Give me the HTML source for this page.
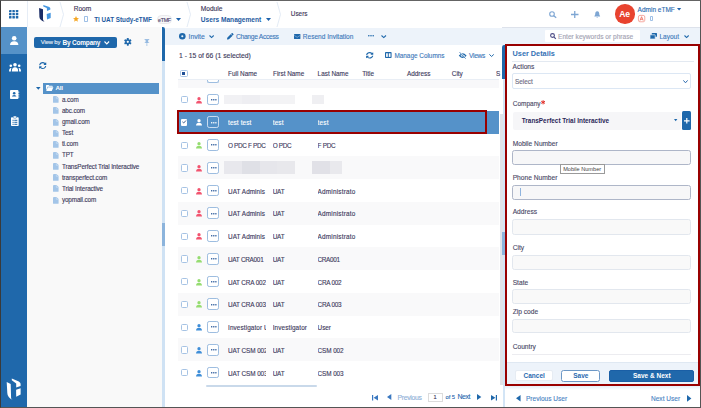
<!DOCTYPE html>
<html><head><meta charset="utf-8">
<style>
*{box-sizing:border-box;margin:0;padding:0}
html,body{width:701px;height:408px;overflow:hidden;background:#fff}
body{position:relative;font-family:"Liberation Sans",sans-serif;color:#3d3a5c}
.a{position:absolute}
.t{position:absolute;white-space:nowrap;line-height:1;-webkit-text-stroke:0.12px currentColor}
svg{position:absolute;overflow:visible}
</style></head><body>
<!-- outer frame -->
<div class="a" style="left:0;top:0;width:701px;height:408px;border-style:solid;border-width:1px;border-color:#646464 #555555 #555555 #3a3a3a;z-index:50;pointer-events:none"></div>

<!-- HEADER -->
<div class="a" style="left:1px;top:1px;width:699px;height:27.3px;background:#fff;border-bottom:1px solid #dde2eb"></div>
<div class="a" style="left:27px;top:1px;width:1px;height:26px;background:#e6edf6"></div>
<!-- grid icon -->
<svg style="left:9.3px;top:9.8px" width="9.3" height="8.4" viewBox="0 0 9.3 8.4"><g fill="#1f68ab">
<rect x="0" y="0" width="2.5" height="2.3" rx="0.5"/><rect x="3.4" y="0" width="2.5" height="2.3" rx="0.5"/><rect x="6.8" y="0" width="2.5" height="2.3" rx="0.5"/>
<rect x="0" y="3.05" width="2.5" height="2.3" rx="0.5"/><rect x="3.4" y="3.05" width="2.5" height="2.3" rx="0.5"/><rect x="6.8" y="3.05" width="2.5" height="2.3" rx="0.5"/>
<rect x="0" y="6.1" width="2.5" height="2.3" rx="0.5"/><rect x="3.4" y="6.1" width="2.5" height="2.3" rx="0.5"/><rect x="6.8" y="6.1" width="2.5" height="2.3" rx="0.5"/></g></svg>
<!-- logo -->
<svg style="left:34px;top:2px" width="22" height="23" viewBox="0 0 22 23">
<path d="M5.1 5.9 L9 7.3 L9 17.5 Q9.4 19 10.5 19.8 Q5.6 18.2 5.4 15 Z" fill="#1b2d66"/>
<path d="M9.3 3.1 L15.3 5.1 Q16.6 6 16.4 7.6 L13 9 L12.8 6.1 L9.3 4.4 Z" fill="#4596e0"/>
<path d="M12.7 12.1 L16.7 10.7 L16.7 16.1 L13 17.5 Z" fill="#4596e0"/>
</svg>
<!-- separators -->
<svg style="left:60px;top:2px" width="4" height="25" viewBox="0 0 4 25"><path d="M0 0 L3.5 12.5 L0 25" fill="none" stroke="#dce6f2" stroke-width="0.8"/></svg>
<svg style="left:187px;top:2px" width="4" height="25" viewBox="0 0 4 25"><path d="M0 0 L3.5 12.5 L0 25" fill="none" stroke="#dce6f2" stroke-width="0.8"/></svg>
<svg style="left:277px;top:2px" width="4" height="25" viewBox="0 0 4 25"><path d="M0 0 L3.5 12.5 L0 25" fill="none" stroke="#dce6f2" stroke-width="0.8"/></svg>

<div class="t" style="left:73.7px;top:6.3px;font-size:6.6px;color:#3a3456">Room</div>
<svg style="left:73px;top:16px" width="6" height="6" viewBox="0 0 10 10"><path d="M5 0 L6.5 3.3 L10 3.6 L7.3 6 L8.1 9.6 L5 7.7 L1.9 9.6 L2.7 6 L0 3.6 L3.5 3.3Z" fill="#f5a623"/></svg>
<div class="a" style="left:84px;top:16px;width:3.6px;height:5.5px;border:0.8px solid #9fc0e6;border-radius:0.8px"></div>
<div class="t" style="left:94.2px;top:16.5px;font-size:6.3px;font-weight:700;-webkit-text-stroke:0;color:#1e5aa0">TI UAT Study-eTMF</div>
<div class="a" style="left:156.5px;top:15px;width:15.5px;height:8.7px;border-radius:4.4px;background:#f7f7f8;border:0.8px solid #e9e9ec"></div>
<div class="t" style="left:158px;top:17.7px;font-size:5.3px;letter-spacing:-0.25px;color:#4a3f6b">eTMF</div>
<svg style="left:176px;top:18.3px" width="5" height="3" viewBox="0 0 5 3"><path d="M0 0 L5 0 L2.5 3Z" fill="#1e62ab"/></svg>

<div class="t" style="left:200.8px;top:6.3px;font-size:6.6px;color:#3a3456">Module</div>
<div class="t" style="left:200.8px;top:16.5px;font-size:6.6px;font-weight:700;-webkit-text-stroke:0;color:#1e5aa0">Users Management</div>
<svg style="left:265.6px;top:18.3px" width="5" height="3" viewBox="0 0 5 3"><path d="M0 0 L5 0 L2.5 3Z" fill="#1e62ab"/></svg>
<div class="t" style="left:290.8px;top:11.3px;font-size:6.4px;color:#3a3456">Users</div>

<!-- right header icons -->
<svg style="left:549px;top:10.7px" width="8" height="7" viewBox="0 0 8 7"><circle cx="3" cy="3" r="2.3" fill="none" stroke="#7ea6d3" stroke-width="1.1"/><path d="M4.7 4.7 L7.2 6.8" stroke="#7ea6d3" stroke-width="1.3"/></svg>
<svg style="left:571.4px;top:10.7px" width="7.5" height="7" viewBox="0 0 7.5 7"><path d="M3.75 0 V7 M0 3.5 H7.5" stroke="#7ea6d3" stroke-width="1.3"/></svg>
<svg style="left:593.6px;top:10.5px" width="6.5" height="7" viewBox="0 0 6.5 7"><path d="M3.25 0.3 C1.5 0.3 1.2 1.8 1.2 3.4 L0.3 5.6 H6.2 L5.3 3.4 C5.3 1.8 5 0.3 3.25 0.3Z M2.3 6 Q3.25 7.2 4.2 6Z" fill="#7ea6d3"/></svg>
<div class="a" style="left:615px;top:4.3px;width:19.5px;height:19.5px;border-radius:50%;background:#e8432f"></div>
<div class="t" style="left:619.2px;top:9.6px;font-size:8.6px;letter-spacing:-0.2px;font-weight:700;-webkit-text-stroke:0;color:#fff">Ae</div>
<div class="t" style="left:637.6px;top:7.1px;font-size:6.5px;color:#2a6ab0">Admin eTMF</div>
<svg style="left:676.6px;top:8px" width="4.2" height="2.6" viewBox="0 0 4.2 2.6"><path d="M0 0 L4.2 0 L2.1 2.6Z" fill="#1e62ab"/></svg>
<svg style="left:637.8px;top:15.1px" width="7.2" height="7.2" viewBox="0 0 7.2 7.2"><rect x="0.4" y="0.4" width="6.4" height="6.4" rx="1.6" fill="none" stroke="#f3958a" stroke-width="0.8"/><path d="M2 5.6 L3.6 1.7 L5.2 5.6 M2.6 4.3 H4.6" fill="none" stroke="#ec5f4c" stroke-width="0.75"/></svg>
<div class="a" style="left:649.7px;top:15.8px;width:3.2px;height:5.1px;border:0.8px solid #9fc0e6;border-radius:0.9px"></div>

<!-- LEFT SIDEBAR -->
<div class="a" style="left:1px;top:27px;width:26px;height:380px;background:#1f68ab"></div>
<div class="a" style="left:1px;top:27px;width:26px;height:27px;background:#5592c8"></div>
<!-- user icon -->
<svg style="left:9.8px;top:36px" width="8.4" height="9" viewBox="0 0 8.4 9"><circle cx="4.2" cy="2.3" r="2.3" fill="#fff"/><path d="M0 9 Q0 5.2 4.2 5.2 Q8.4 5.2 8.4 9Z" fill="#fff"/></svg>
<!-- group icon -->
<svg style="left:9.2px;top:62.9px" width="12" height="8.5" viewBox="0 0 12 8.5"><g fill="#fff">
<circle cx="6" cy="1.8" r="1.8"/><circle cx="1.8" cy="2.8" r="1.3"/><circle cx="10.2" cy="2.8" r="1.3"/>
<path d="M2.8 8.5 Q2.8 4.3 6 4.3 Q9.2 4.3 9.2 8.5Z"/><path d="M0 8.5 Q0 5 2 5 L2.4 5 Q1.8 6.5 1.9 8.5Z"/><path d="M12 8.5 Q12 5 10 5 L9.6 5 Q10.2 6.5 10.1 8.5Z"/></g></svg>
<!-- contact card -->
<svg style="left:9.7px;top:90px" width="9.2" height="9" viewBox="0 0 9.2 9"><path d="M0.8 0 H7.6 Q8.4 0 8.4 0.8 V8.2 Q8.4 9 7.6 9 H0.8 Q0 9 0 8.2 V0.8 Q0 0 0.8 0Z" fill="#fff"/><rect x="8.5" y="1.5" width="0.7" height="1.5" fill="#fff"/><rect x="8.5" y="4" width="0.7" height="1.5" fill="#fff"/><rect x="8.5" y="6.3" width="0.7" height="1.5" fill="#fff"/><circle cx="4.2" cy="3.3" r="1.3" fill="#1f68ab"/><path d="M2 6.6 Q2 5 4.2 5 Q6.4 5 6.4 6.6Z" fill="#1f68ab"/></svg>
<!-- clipboard -->
<svg style="left:10.5px;top:116px" width="7.7" height="10" viewBox="0 0 7.7 10"><path d="M0.8 1.2 H6.9 Q7.7 1.2 7.7 2 V9.2 Q7.7 10 6.9 10 H0.8 Q0 10 0 9.2 V2 Q0 1.2 0.8 1.2Z" fill="#fff"/><rect x="2.3" y="0" width="3.1" height="2.2" rx="0.6" fill="#fff" stroke="#1f68ab" stroke-width="0.5"/><g fill="#1f68ab"><rect x="1.5" y="3.8" width="1.2" height="1"/><rect x="3.3" y="3.8" width="3" height="1"/><rect x="1.5" y="5.8" width="1.2" height="1"/><rect x="3.3" y="5.8" width="3" height="1"/><rect x="1.5" y="7.8" width="1.2" height="1"/><rect x="3.3" y="7.8" width="3" height="1"/></g></svg>
<!-- bottom logo white -->
<svg style="left:3px;top:374px" width="22" height="30" viewBox="0 0 22 30">
<path d="M3.7 8.1 L7.7 9.9 L8.1 24.3 Q8.5 25.5 9.9 26.1 Q4.4 23.5 4.3 19 Z" fill="#fff"/>
<path d="M8.8 4.4 L15.8 7.4 Q17.6 8.5 17.6 9.8 L17.6 12.1 L13.2 13.6 L13.2 9.6 L8.8 6.3 Z" fill="#fff"/>
<path d="M13.1 15.8 L17.6 14.3 L17.6 20.6 L13.2 22.8 Z" fill="#fff"/>
</svg>

<!-- TREE PANEL -->
<div class="a" style="left:27px;top:27px;width:135px;height:380px;background:#f9f9f9"></div>
<div class="a" style="left:34px;top:36.5px;width:83px;height:11.5px;background:#1f68ab;border-radius:2px"></div>
<div class="t" style="left:40.8px;top:40.3px;font-size:5.9px;letter-spacing:-0.15px;color:#e6eef8">View by</div>
<div class="t" style="left:62.5px;top:39.6px;font-size:6.5px;font-weight:700;-webkit-text-stroke:0;letter-spacing:-0.2px;color:#fff">By Company</div>
<svg style="left:103.8px;top:40.8px" width="5.6" height="3.5" viewBox="0 0 5.6 3.5"><path d="M0.5 0.5 L2.8 2.9 L5.1 0.5" fill="none" stroke="#fff" stroke-width="1.1"/></svg>
<!-- gear -->
<svg style="left:124px;top:38.1px" width="7.6" height="7.7" viewBox="0 0 8 8"><g fill="#1f68ab"><circle cx="4" cy="4" r="2.7"/><rect x="3" y="0" width="2" height="8" rx="0.4"/><rect x="3" y="0" width="2" height="8" rx="0.4" transform="rotate(60 4 4)"/><rect x="3" y="0" width="2" height="8" rx="0.4" transform="rotate(120 4 4)"/></g><circle cx="4" cy="4" r="1.2" fill="#fafafa"/></svg>
<!-- pin -->
<svg style="left:143.9px;top:39px" width="5.8" height="7" viewBox="0 0 5.8 7"><g fill="#94b9e0"><rect x="0.6" y="0" width="4.6" height="0.9"/><path d="M1.5 0.9 H4.3 L4.1 3 L5.6 4.1 H0.2 L1.7 3Z"/><rect x="2.55" y="4.1" width="0.7" height="2.9"/></g></svg>
<!-- refresh -->
<svg style="left:38.9px;top:61.9px" width="7.4" height="7.2" viewBox="0 0 512 512" preserveAspectRatio="none"><path d="M370.72 133.28C339.458 104.008 298.888 87.962 255.848 88c-77.458.068-144.328 53.178-162.791 126.85-1.344 5.363-6.122 9.15-11.651 9.150H24.103c-7.498 0-13.194-6.807-11.807-14.176C33.933 94.924 134.813 8 256 8c66.448 0 126.791 26.136 171.315 68.685L463.03 40.97C478.149 25.851 504 36.559 504 57.941V192c0 13.255-10.745 24-24 24H345.941c-21.382 0-32.090-25.851-16.971-40.971l41.750-41.749zM32 296h134.059c21.382 0 32.090 25.851 16.971 40.971l-41.750 41.750c31.262 29.273 71.835 45.319 114.876 45.280 77.418-.070 144.315-53.144 162.787-126.849 1.344-5.363 6.122-9.150 11.651-9.150h57.304c7.498 0 13.194 6.807 11.807 14.176C478.067 417.076 377.187 504 256 504c-66.448 0-126.791-26.136-171.315-68.685L48.970 471.030C33.851 486.149 8 475.441 8 454.059V320c0-13.255 10.745-24 24-24z" fill="#1f68ab"/></svg>

<!-- tree -->
<svg style="left:36.4px;top:86.9px" width="4.6" height="2.7" viewBox="0 0 4.6 2.7"><path d="M0 0 L4.6 0 L2.3 2.7Z" fill="#1f68ab"/></svg>
<div class="a" style="left:43px;top:83px;width:116px;height:10.7px;background:#5592c9"></div>
<svg style="left:45.8px;top:85px" width="7.4" height="6" viewBox="0 0 7.4 6"><path d="M0 0.6 Q0 0 0.6 0 H2.6 L3.3 0.8 H6.2 Q6.8 0.8 6.8 1.4 V1.8 H1.6 L0 5.5Z" fill="#fff"/><path d="M1.8 2.3 H7.4 L5.8 6 H0.2Z" fill="#fff"/></svg>
<div class="t" style="left:55.4px;top:85.4px;font-size:6.2px;font-weight:700;-webkit-text-stroke:0;letter-spacing:-0.2px;color:#fff">All</div>
<svg style="left:53.2px;top:96.20px" width="5.6" height="6.7" viewBox="0 0 5.6 6.7"><path d="M0 0.5 Q0 0 0.5 0 H3.5 L5.6 2 V6.2 Q5.6 6.7 5.1 6.7 H0.5 Q0 6.7 0 6.2Z" fill="#a3c5e8"/><path d="M3.3 0.3 V2.3 H5.4" fill="none" stroke="#d3e4f5" stroke-width="0.6"/></svg>
<div class="t" style="left:61.9px;top:96.70px;font-size:6.35px;letter-spacing:-0.12px;color:#3d3a5c">a.com</div>
<svg style="left:53.2px;top:107.35px" width="5.6" height="6.7" viewBox="0 0 5.6 6.7"><path d="M0 0.5 Q0 0 0.5 0 H3.5 L5.6 2 V6.2 Q5.6 6.7 5.1 6.7 H0.5 Q0 6.7 0 6.2Z" fill="#a3c5e8"/><path d="M3.3 0.3 V2.3 H5.4" fill="none" stroke="#d3e4f5" stroke-width="0.6"/></svg>
<div class="t" style="left:61.9px;top:107.85px;font-size:6.35px;letter-spacing:-0.12px;color:#3d3a5c">abc.com</div>
<svg style="left:53.2px;top:118.50px" width="5.6" height="6.7" viewBox="0 0 5.6 6.7"><path d="M0 0.5 Q0 0 0.5 0 H3.5 L5.6 2 V6.2 Q5.6 6.7 5.1 6.7 H0.5 Q0 6.7 0 6.2Z" fill="#a3c5e8"/><path d="M3.3 0.3 V2.3 H5.4" fill="none" stroke="#d3e4f5" stroke-width="0.6"/></svg>
<div class="t" style="left:61.9px;top:119.00px;font-size:6.35px;letter-spacing:-0.12px;color:#3d3a5c">gmail.com</div>
<svg style="left:53.2px;top:129.65px" width="5.6" height="6.7" viewBox="0 0 5.6 6.7"><path d="M0 0.5 Q0 0 0.5 0 H3.5 L5.6 2 V6.2 Q5.6 6.7 5.1 6.7 H0.5 Q0 6.7 0 6.2Z" fill="#a3c5e8"/><path d="M3.3 0.3 V2.3 H5.4" fill="none" stroke="#d3e4f5" stroke-width="0.6"/></svg>
<div class="t" style="left:61.9px;top:130.15px;font-size:6.35px;letter-spacing:-0.12px;color:#3d3a5c">Test</div>
<svg style="left:53.2px;top:140.80px" width="5.6" height="6.7" viewBox="0 0 5.6 6.7"><path d="M0 0.5 Q0 0 0.5 0 H3.5 L5.6 2 V6.2 Q5.6 6.7 5.1 6.7 H0.5 Q0 6.7 0 6.2Z" fill="#a3c5e8"/><path d="M3.3 0.3 V2.3 H5.4" fill="none" stroke="#d3e4f5" stroke-width="0.6"/></svg>
<div class="t" style="left:61.9px;top:141.30px;font-size:6.35px;letter-spacing:-0.12px;color:#3d3a5c">ti.com</div>
<svg style="left:53.2px;top:151.95px" width="5.6" height="6.7" viewBox="0 0 5.6 6.7"><path d="M0 0.5 Q0 0 0.5 0 H3.5 L5.6 2 V6.2 Q5.6 6.7 5.1 6.7 H0.5 Q0 6.7 0 6.2Z" fill="#a3c5e8"/><path d="M3.3 0.3 V2.3 H5.4" fill="none" stroke="#d3e4f5" stroke-width="0.6"/></svg>
<div class="t" style="left:61.9px;top:152.45px;font-size:6.35px;letter-spacing:-0.12px;color:#3d3a5c">TPT</div>
<svg style="left:53.2px;top:163.10px" width="5.6" height="6.7" viewBox="0 0 5.6 6.7"><path d="M0 0.5 Q0 0 0.5 0 H3.5 L5.6 2 V6.2 Q5.6 6.7 5.1 6.7 H0.5 Q0 6.7 0 6.2Z" fill="#a3c5e8"/><path d="M3.3 0.3 V2.3 H5.4" fill="none" stroke="#d3e4f5" stroke-width="0.6"/></svg>
<div class="t" style="left:61.9px;top:163.60px;font-size:6.35px;letter-spacing:-0.12px;color:#3d3a5c">TransPerfect Trial Interactive</div>
<svg style="left:53.2px;top:174.25px" width="5.6" height="6.7" viewBox="0 0 5.6 6.7"><path d="M0 0.5 Q0 0 0.5 0 H3.5 L5.6 2 V6.2 Q5.6 6.7 5.1 6.7 H0.5 Q0 6.7 0 6.2Z" fill="#a3c5e8"/><path d="M3.3 0.3 V2.3 H5.4" fill="none" stroke="#d3e4f5" stroke-width="0.6"/></svg>
<div class="t" style="left:61.9px;top:174.75px;font-size:6.35px;letter-spacing:-0.12px;color:#3d3a5c">transperfect.com</div>
<svg style="left:53.2px;top:185.40px" width="5.6" height="6.7" viewBox="0 0 5.6 6.7"><path d="M0 0.5 Q0 0 0.5 0 H3.5 L5.6 2 V6.2 Q5.6 6.7 5.1 6.7 H0.5 Q0 6.7 0 6.2Z" fill="#a3c5e8"/><path d="M3.3 0.3 V2.3 H5.4" fill="none" stroke="#d3e4f5" stroke-width="0.6"/></svg>
<div class="t" style="left:61.9px;top:185.90px;font-size:6.35px;letter-spacing:-0.12px;color:#3d3a5c">Trial Interactive</div>
<svg style="left:53.2px;top:196.55px" width="5.6" height="6.7" viewBox="0 0 5.6 6.7"><path d="M0 0.5 Q0 0 0.5 0 H3.5 L5.6 2 V6.2 Q5.6 6.7 5.1 6.7 H0.5 Q0 6.7 0 6.2Z" fill="#a3c5e8"/><path d="M3.3 0.3 V2.3 H5.4" fill="none" stroke="#d3e4f5" stroke-width="0.6"/></svg>
<div class="t" style="left:61.9px;top:197.05px;font-size:6.35px;letter-spacing:-0.12px;color:#3d3a5c">yopmail.com</div>

<!-- splitter -->
<div class="a" style="left:161.6px;top:27px;width:3.4px;height:380px;background:#cfe2f4"></div>
<div class="a" style="left:161.4px;top:27px;width:3.6px;height:34px;background:#fff"></div>
<div class="a" style="left:161.6px;top:27.3px;width:3.4px;height:33.6px;background:#1f68ab;border-radius:0 2.2px 0 0"></div>
<div class="a" style="left:161.6px;top:223px;width:3.4px;height:23px;background:#8cb4dc"></div>

<!-- MAIN -->
<div class="a" style="left:165px;top:27px;width:337px;height:380px;background:#fff"></div>
<div class="a" style="left:165px;top:28.3px;width:535px;height:16.4px;background:#edf3fa"></div>
<!-- toolbar items -->
<svg style="left:179.4px;top:32.9px" width="6.6" height="6.6" viewBox="0 0 6.6 6.6"><circle cx="3.3" cy="3.3" r="3.3" fill="#1f68ab"/><circle cx="3.3" cy="3.3" r="1.05" fill="#edf3fa"/></svg>
<div class="t" style="left:188.5px;top:33.9px;font-size:6.8px;color:#4079ba">Invite</div>
<svg style="left:208.5px;top:34.6px" width="5.2" height="3.2" viewBox="0 0 5.2 3.2"><path d="M0.5 0.5 L2.6 2.6 L4.7 0.5" fill="none" stroke="#1f68ab" stroke-width="1.1"/></svg>
<svg style="left:226.8px;top:32.8px" width="6.6" height="6.6" viewBox="0 0 512 512"><path d="M497.9 142.1l-46.1 46.1c-4.7 4.7-12.3 4.7-17 0l-111-111c-4.7-4.7-4.7-12.3 0-17l46.1-46.1c18.7-18.7 49.1-18.7 67.9 0l60.1 60.1c18.8 18.7 18.8 49.1 0 67.9zM284.2 99.8L21.6 362.4.4 483.9c-2.9 16.4 11.4 30.6 27.8 27.8l121.5-21.3 262.6-262.6c4.7-4.7 4.7-12.3 0-17l-111-111c-4.8-4.7-12.4-4.7-17.1 0z" fill="#1f68ab"/></svg>
<div class="t" style="left:236px;top:33.7px;font-size:6.7px;letter-spacing:-0.3px;color:#4079ba">Change Access</div>
<svg style="left:293.6px;top:33.5px" width="6.4" height="5.1" viewBox="0 0 6.4 5.1"><rect x="0" y="0" width="6.4" height="5.1" rx="0.6" fill="#1f68ab"/><path d="M0.2 1.4 L3.2 3.3 L6.2 1.4" fill="none" stroke="#9fc0e3" stroke-width="0.6"/></svg>
<div class="t" style="left:302.8px;top:33.9px;font-size:6.55px;color:#4079ba">Resend Invitation</div>
<svg style="left:368px;top:35.4px" width="6" height="1.6" viewBox="0 0 6 1.6"><g fill="#1f68ab"><circle cx="0.8" cy="0.8" r="0.8"/><circle cx="3" cy="0.8" r="0.8"/><circle cx="5.2" cy="0.8" r="0.8"/></g></svg>
<svg style="left:380.7px;top:34.6px" width="5.5" height="3.2" viewBox="0 0 5.5 3.2"><path d="M0.5 0.5 L2.75 2.6 L5 0.5" fill="none" stroke="#1f68ab" stroke-width="1.1"/></svg>
<!-- search box -->
<div class="a" style="left:545px;top:30px;width:95px;height:12.2px;background:#fff;border-radius:1px"></div>
<svg style="left:549.5px;top:32.8px" width="6" height="6" viewBox="0 0 6 6"><circle cx="2.5" cy="2.5" r="1.9" fill="none" stroke="#4e4c86" stroke-width="1.1"/><path d="M3.8 3.8 L5.8 5.8" stroke="#4e4c86" stroke-width="1.2"/></svg>
<div class="t" style="left:558px;top:33.8px;font-size:6.6px;color:#a3a3b3">Enter keywords or phrase</div>
<svg style="left:650.3px;top:33px" width="7" height="6" viewBox="0 0 7 6"><rect x="1.8" y="0" width="5.2" height="3.8" rx="0.5" fill="#1f68ab"/><rect x="0" y="1.8" width="5.2" height="4.2" rx="0.5" fill="#1f68ab" stroke="#edf3fa" stroke-width="0.7"/></svg>
<div class="t" style="left:659.5px;top:33.8px;font-size:6.5px;color:#4079ba">Layout</div>
<svg style="left:683.5px;top:35px" width="5.2" height="3.2" viewBox="0 0 5.2 3.2"><path d="M0.5 0.5 L2.6 2.6 L4.7 0.5" fill="none" stroke="#1f68ab" stroke-width="1.1"/></svg>

<!-- count row -->
<div class="t" style="left:179px;top:53.2px;font-size:6.8px;color:#3d3a5c">1 - 15 of 66 (1 selected)</div>
<svg style="left:365.6px;top:52px" width="7.4" height="6.6" viewBox="0 0 512 512" preserveAspectRatio="none"><path d="M370.72 133.28C339.458 104.008 298.888 87.962 255.848 88c-77.458.068-144.328 53.178-162.791 126.85-1.344 5.363-6.122 9.15-11.651 9.150H24.103c-7.498 0-13.194-6.807-11.807-14.176C33.933 94.924 134.813 8 256 8c66.448 0 126.791 26.136 171.315 68.685L463.03 40.97C478.149 25.851 504 36.559 504 57.941V192c0 13.255-10.745 24-24 24H345.941c-21.382 0-32.090-25.851-16.971-40.971l41.750-41.749zM32 296h134.059c21.382 0 32.090 25.851 16.971 40.971l-41.750 41.750c31.262 29.273 71.835 45.319 114.876 45.280 77.418-.070 144.315-53.144 162.787-126.849 1.344-5.363 6.122-9.150 11.651-9.150h57.304c7.498 0 13.194 6.807 11.807 14.176C478.067 417.076 377.187 504 256 504c-66.448 0-126.791-26.136-171.315-68.685L48.970 471.030C33.851 486.149 8 475.441 8 454.059V320c0-13.255 10.745-24 24-24z" fill="#1f68ab"/></svg>
<svg style="left:385px;top:52.3px" width="6.6" height="6" viewBox="0 0 6.6 6"><rect x="0" y="0" width="6.6" height="6" rx="0.8" fill="#1f68ab"/><rect x="1.1" y="1.3" width="1.7" height="3.6" fill="#fff"/><rect x="3.8" y="1.3" width="1.7" height="3.6" fill="#fff"/></svg>
<div class="t" style="left:394.4px;top:53px;font-size:6.4px;color:#4079ba">Manage Columns</div>
<svg style="left:459px;top:51.8px" width="7.4" height="6.8" viewBox="0 0 7.4 6.8"><path d="M0.6 3.6 Q3.7 0 6.8 3.6 Q3.7 7.2 0.6 3.6Z" fill="none" stroke="#1f68ab" stroke-width="1.2"/><circle cx="3.7" cy="3.6" r="1" fill="#1f68ab"/><path d="M0.8 0.3 L6.8 6.5" stroke="#fff" stroke-width="1.3"/><path d="M0.6 0.2 L6.6 6.6" stroke="#1f68ab" stroke-width="0.8"/></svg>
<div class="t" style="left:469px;top:52.8px;font-size:6.6px;letter-spacing:-0.28px;color:#4079ba">Views</div>
<svg style="left:489px;top:53.9px" width="5.2" height="3" viewBox="0 0 5.2 3"><path d="M0.4 0.4 L2.6 2.5 L4.8 0.4" fill="none" stroke="#1f68ab" stroke-width="1"/></svg>

<!-- table -->
<div class="a" style="left:178px;top:79px;width:321px;height:9.2px;background:#f8f8fa"></div>
<div class="a" style="left:207.3px;top:76px;width:11.9px;height:6.8px;border:1px solid #9dbde0;border-top:none;border-radius:0 0 2.2px 2.2px;background:#fff"></div>
<div class="a" style="left:165px;top:62px;width:337px;height:17px;background:#fff"></div>
<div class="a" style="left:178px;top:79px;width:321px;height:1px;background:#e9eef5"></div>
<div class="a" style="left:180.1px;top:70.3px;width:7.5px;height:7px;border:1px solid #a9c5e6;border-radius:1.5px;background:#fff"></div>
<div class="a" style="left:182.4px;top:72.4px;width:3px;height:3px;background:#1f4e96"></div>
<div class="t" style="left:228px;top:70.6px;font-size:6.4px;color:#3d3a5c">Full Name</div>
<div class="t" style="left:273px;top:70.6px;font-size:6.4px;color:#3d3a5c">First Name</div>
<div class="t" style="left:317.6px;top:70.6px;font-size:6.4px;color:#3d3a5c">Last Name</div>
<div class="t" style="left:362.2px;top:70.6px;font-size:6.4px;color:#3d3a5c">Title</div>
<div class="t" style="left:407px;top:70.6px;font-size:6.4px;color:#3d3a5c">Address</div>
<div class="t" style="left:451.8px;top:70.6px;font-size:6.4px;color:#3d3a5c">City</div>
<div class="t" style="left:496px;top:70.6px;font-size:6.4px;color:#3d3a5c">S</div>
<div class="a" style="left:178px;top:88.20px;width:321px;height:22.75px;background:#ffffff"></div>
<div class="a" style="left:180.7px;top:96.08px;width:7.2px;height:7.3px;border:1px solid #a6c3e4;border-radius:1.5px;background:#fff"></div>
<svg style="left:195.9px;top:96.67px" width="6" height="6.6" viewBox="0 0 6 6.6"><circle cx="3" cy="1.65" r="1.65" fill="#f2546f"/><path d="M0 6.6 Q0 3.7 3 3.7 Q6 3.7 6 6.6Z" fill="#f2546f"/></svg>
<div class="a" style="left:207.3px;top:93.67px;width:11.9px;height:11.7px;border:1px solid #9dbde0;border-radius:2.2px;background:#fff"></div>
<svg style="left:210.8px;top:99px" width="6" height="1.6" viewBox="0 0 6 1.6"><g fill="#2d5c9c"><rect x="0" y="0" width="1.4" height="1.5" rx="0.4"/><rect x="2.1" y="0" width="1.4" height="1.5" rx="0.4"/><rect x="4.2" y="0" width="1.4" height="1.5" rx="0.4"/></g></svg>
<div class="a" style="left:224.2px;top:95.08px;width:18px;height:9px;background:#f1f1f4"></div>
<div class="a" style="left:242.2px;top:95.08px;width:17.5px;height:9px;background:#eeeef2"></div>
<div class="a" style="left:259.7px;top:95.08px;width:17.5px;height:9px;background:#f3f3f5"></div>
<div class="a" style="left:277.2px;top:95.08px;width:17.5px;height:9px;background:#f3f3f5"></div>
<div class="a" style="left:312px;top:95.08px;width:12px;height:9px;background:#efeff2"></div>
<div class="a" style="left:178px;top:110.95px;width:321px;height:22.75px;background:#5592c9"></div>
<div class="a" style="left:181px;top:119.12px;width:6.4px;height:6.4px;background:#fff;border-radius:1px"></div>
<svg style="left:182px;top:120.33px" width="4.4" height="3.6" viewBox="0 0 4.4 3.6"><path d="M0.4 1.8 L1.7 3 L4 0.5" fill="none" stroke="#2b4d80" stroke-width="0.9"/></svg>
<svg style="left:195.9px;top:119.42px" width="6" height="6.6" viewBox="0 0 6 6.6"><circle cx="3" cy="1.65" r="1.65" fill="#ffffff"/><path d="M0 6.6 Q0 3.7 3 3.7 Q6 3.7 6 6.6Z" fill="#ffffff"/></svg>
<div class="a" style="left:207.3px;top:116.42px;width:11.9px;height:11.7px;border:1px solid #c9dcf0;border-radius:2.2px;background:transparent"></div>
<svg style="left:210.8px;top:122px" width="6" height="1.6" viewBox="0 0 6 1.6"><g fill="#ffffff"><rect x="0" y="0" width="1.4" height="1.5" rx="0.4"/><rect x="2.1" y="0" width="1.4" height="1.5" rx="0.4"/><rect x="4.2" y="0" width="1.4" height="1.5" rx="0.4"/></g></svg>
<div class="t" style="left:228px;top:120.42px;width:37.8px;overflow:hidden;font-size:6.4px;letter-spacing:0.110px;color:#ffffff">test test</div>
<div class="t" style="left:272.7px;top:120.42px;width:40px;overflow:hidden;font-size:6.4px;letter-spacing:0.170px;color:#ffffff">test</div>
<div class="t" style="left:317.6px;top:120.42px;width:44px;overflow:hidden;font-size:6.4px;letter-spacing:0.170px;color:#ffffff">test</div>
<div class="a" style="left:178px;top:133.70px;width:321px;height:22.75px;background:#ffffff"></div>
<div class="a" style="left:180.7px;top:141.57px;width:7.2px;height:7.3px;border:1px solid #a6c3e4;border-radius:1.5px;background:#fff"></div>
<svg style="left:195.9px;top:142.17px" width="6" height="6.6" viewBox="0 0 6 6.6"><circle cx="3" cy="1.65" r="1.65" fill="#95dc70"/><path d="M0 6.6 Q0 3.7 3 3.7 Q6 3.7 6 6.6Z" fill="#95dc70"/></svg>
<div class="a" style="left:207.3px;top:139.17px;width:11.9px;height:11.7px;border:1px solid #9dbde0;border-radius:2.2px;background:#fff"></div>
<svg style="left:210.8px;top:144px" width="6" height="1.6" viewBox="0 0 6 1.6"><g fill="#2d5c9c"><rect x="0" y="0" width="1.4" height="1.5" rx="0.4"/><rect x="2.1" y="0" width="1.4" height="1.5" rx="0.4"/><rect x="4.2" y="0" width="1.4" height="1.5" rx="0.4"/></g></svg>
<div class="t" style="left:228px;top:143.17px;width:37.8px;overflow:hidden;font-size:6.4px;letter-spacing:-0.330px;color:#3d3a5c">O PDC F PDC</div>
<div class="t" style="left:272.7px;top:143.17px;width:40px;overflow:hidden;font-size:6.4px;letter-spacing:-0.310px;color:#3d3a5c">O PDC</div>
<div class="t" style="left:317.6px;top:143.17px;width:44px;overflow:hidden;font-size:6.4px;letter-spacing:-0.300px;color:#3d3a5c">F PDC</div>
<div class="a" style="left:178px;top:156.45px;width:321px;height:22.75px;background:#f9f9fa"></div>
<div class="a" style="left:180.7px;top:164.32px;width:7.2px;height:7.3px;border:1px solid #a6c3e4;border-radius:1.5px;background:#fff"></div>
<svg style="left:195.9px;top:164.92px" width="6" height="6.6" viewBox="0 0 6 6.6"><circle cx="3" cy="1.65" r="1.65" fill="#f2546f"/><path d="M0 6.6 Q0 3.7 3 3.7 Q6 3.7 6 6.6Z" fill="#f2546f"/></svg>
<div class="a" style="left:207.3px;top:161.92px;width:11.9px;height:11.7px;border:1px solid #9dbde0;border-radius:2.2px;background:#fff"></div>
<svg style="left:210.8px;top:167px" width="6" height="1.6" viewBox="0 0 6 1.6"><g fill="#2d5c9c"><rect x="0" y="0" width="1.4" height="1.5" rx="0.4"/><rect x="2.1" y="0" width="1.4" height="1.5" rx="0.4"/><rect x="4.2" y="0" width="1.4" height="1.5" rx="0.4"/></g></svg>
<div class="a" style="left:224px;top:161.32px;width:18px;height:13px;background:#e8e8ed"></div>
<div class="a" style="left:242px;top:161.32px;width:17.5px;height:13px;background:#dfe0e6"></div>
<div class="a" style="left:259.5px;top:161.32px;width:17.5px;height:13px;background:#e6e6eb"></div>
<div class="a" style="left:277px;top:161.32px;width:18px;height:13px;background:#e8e8ec"></div>
<div class="a" style="left:312px;top:161.32px;width:18px;height:13px;background:#e1e1e7"></div>
<div class="a" style="left:330px;top:161.32px;width:12px;height:13px;background:#e9e9ed"></div>
<div class="a" style="left:178px;top:179.20px;width:321px;height:22.75px;background:#ffffff"></div>
<div class="a" style="left:180.7px;top:187.07px;width:7.2px;height:7.3px;border:1px solid #a6c3e4;border-radius:1.5px;background:#fff"></div>
<svg style="left:195.9px;top:187.67px" width="6" height="6.6" viewBox="0 0 6 6.6"><circle cx="3" cy="1.65" r="1.65" fill="#f2546f"/><path d="M0 6.6 Q0 3.7 3 3.7 Q6 3.7 6 6.6Z" fill="#f2546f"/></svg>
<div class="a" style="left:207.3px;top:184.67px;width:11.9px;height:11.7px;border:1px solid #9dbde0;border-radius:2.2px;background:#fff"></div>
<svg style="left:210.8px;top:190px" width="6" height="1.6" viewBox="0 0 6 1.6"><g fill="#2d5c9c"><rect x="0" y="0" width="1.4" height="1.5" rx="0.4"/><rect x="2.1" y="0" width="1.4" height="1.5" rx="0.4"/><rect x="4.2" y="0" width="1.4" height="1.5" rx="0.4"/></g></svg>
<div class="t" style="left:228px;top:188.67px;width:37.8px;overflow:hidden;font-size:6.4px;letter-spacing:0.050px;color:#3d3a5c">UAT Adminis</div>
<div class="t" style="left:272.7px;top:188.67px;width:40px;overflow:hidden;font-size:6.4px;letter-spacing:-0.200px;color:#3d3a5c">UAT</div>
<div class="t" style="left:317.6px;top:188.67px;width:44px;overflow:hidden;font-size:6.4px;letter-spacing:0.200px;color:#3d3a5c">Administrato</div>
<div class="a" style="left:178px;top:201.95px;width:321px;height:22.75px;background:#f9f9fa"></div>
<div class="a" style="left:180.7px;top:209.82px;width:7.2px;height:7.3px;border:1px solid #a6c3e4;border-radius:1.5px;background:#fff"></div>
<svg style="left:195.9px;top:210.42px" width="6" height="6.6" viewBox="0 0 6 6.6"><circle cx="3" cy="1.65" r="1.65" fill="#f2546f"/><path d="M0 6.6 Q0 3.7 3 3.7 Q6 3.7 6 6.6Z" fill="#f2546f"/></svg>
<div class="a" style="left:207.3px;top:207.42px;width:11.9px;height:11.7px;border:1px solid #9dbde0;border-radius:2.2px;background:#fff"></div>
<svg style="left:210.8px;top:213px" width="6" height="1.6" viewBox="0 0 6 1.6"><g fill="#2d5c9c"><rect x="0" y="0" width="1.4" height="1.5" rx="0.4"/><rect x="2.1" y="0" width="1.4" height="1.5" rx="0.4"/><rect x="4.2" y="0" width="1.4" height="1.5" rx="0.4"/></g></svg>
<div class="t" style="left:228px;top:211.42px;width:37.8px;overflow:hidden;font-size:6.4px;letter-spacing:0.050px;color:#3d3a5c">UAT Adminis</div>
<div class="t" style="left:272.7px;top:211.42px;width:40px;overflow:hidden;font-size:6.4px;letter-spacing:-0.200px;color:#3d3a5c">UAT</div>
<div class="t" style="left:317.6px;top:211.42px;width:44px;overflow:hidden;font-size:6.4px;letter-spacing:0.200px;color:#3d3a5c">Administrato</div>
<div class="a" style="left:178px;top:224.70px;width:321px;height:22.75px;background:#ffffff"></div>
<div class="a" style="left:180.7px;top:232.57px;width:7.2px;height:7.3px;border:1px solid #a6c3e4;border-radius:1.5px;background:#fff"></div>
<svg style="left:195.9px;top:233.17px" width="6" height="6.6" viewBox="0 0 6 6.6"><circle cx="3" cy="1.65" r="1.65" fill="#f2546f"/><path d="M0 6.6 Q0 3.7 3 3.7 Q6 3.7 6 6.6Z" fill="#f2546f"/></svg>
<div class="a" style="left:207.3px;top:230.17px;width:11.9px;height:11.7px;border:1px solid #9dbde0;border-radius:2.2px;background:#fff"></div>
<svg style="left:210.8px;top:235px" width="6" height="1.6" viewBox="0 0 6 1.6"><g fill="#2d5c9c"><rect x="0" y="0" width="1.4" height="1.5" rx="0.4"/><rect x="2.1" y="0" width="1.4" height="1.5" rx="0.4"/><rect x="4.2" y="0" width="1.4" height="1.5" rx="0.4"/></g></svg>
<div class="t" style="left:228px;top:234.17px;width:37.8px;overflow:hidden;font-size:6.4px;letter-spacing:0.050px;color:#3d3a5c">UAT Adminis</div>
<div class="t" style="left:272.7px;top:234.17px;width:40px;overflow:hidden;font-size:6.4px;letter-spacing:-0.200px;color:#3d3a5c">UAT</div>
<div class="t" style="left:317.6px;top:234.17px;width:44px;overflow:hidden;font-size:6.4px;letter-spacing:0.200px;color:#3d3a5c">Administrato</div>
<div class="a" style="left:178px;top:247.45px;width:321px;height:22.75px;background:#f9f9fa"></div>
<div class="a" style="left:180.7px;top:255.32px;width:7.2px;height:7.3px;border:1px solid #a6c3e4;border-radius:1.5px;background:#fff"></div>
<svg style="left:195.9px;top:255.92px" width="6" height="6.6" viewBox="0 0 6 6.6"><circle cx="3" cy="1.65" r="1.65" fill="#95dc70"/><path d="M0 6.6 Q0 3.7 3 3.7 Q6 3.7 6 6.6Z" fill="#95dc70"/></svg>
<div class="a" style="left:207.3px;top:252.92px;width:11.9px;height:11.7px;border:1px solid #9dbde0;border-radius:2.2px;background:#fff"></div>
<svg style="left:210.8px;top:258px" width="6" height="1.6" viewBox="0 0 6 1.6"><g fill="#2d5c9c"><rect x="0" y="0" width="1.4" height="1.5" rx="0.4"/><rect x="2.1" y="0" width="1.4" height="1.5" rx="0.4"/><rect x="4.2" y="0" width="1.4" height="1.5" rx="0.4"/></g></svg>
<div class="t" style="left:228px;top:256.93px;width:37.8px;overflow:hidden;font-size:6.4px;letter-spacing:-0.270px;color:#3d3a5c">UAT CRA001</div>
<div class="t" style="left:272.7px;top:256.93px;width:40px;overflow:hidden;font-size:6.4px;letter-spacing:-0.200px;color:#3d3a5c">UAT</div>
<div class="t" style="left:317.6px;top:256.93px;width:44px;overflow:hidden;font-size:6.4px;letter-spacing:-0.360px;color:#3d3a5c">CRA001</div>
<div class="a" style="left:178px;top:270.20px;width:321px;height:22.75px;background:#ffffff"></div>
<div class="a" style="left:180.7px;top:278.07px;width:7.2px;height:7.3px;border:1px solid #a6c3e4;border-radius:1.5px;background:#fff"></div>
<svg style="left:195.9px;top:278.68px" width="6" height="6.6" viewBox="0 0 6 6.6"><circle cx="3" cy="1.65" r="1.65" fill="#95dc70"/><path d="M0 6.6 Q0 3.7 3 3.7 Q6 3.7 6 6.6Z" fill="#95dc70"/></svg>
<div class="a" style="left:207.3px;top:275.68px;width:11.9px;height:11.7px;border:1px solid #9dbde0;border-radius:2.2px;background:#fff"></div>
<svg style="left:210.8px;top:281px" width="6" height="1.6" viewBox="0 0 6 1.6"><g fill="#2d5c9c"><rect x="0" y="0" width="1.4" height="1.5" rx="0.4"/><rect x="2.1" y="0" width="1.4" height="1.5" rx="0.4"/><rect x="4.2" y="0" width="1.4" height="1.5" rx="0.4"/></g></svg>
<div class="t" style="left:228px;top:279.68px;width:37.8px;overflow:hidden;font-size:6.4px;letter-spacing:-0.150px;color:#3d3a5c">UAT CRA 002</div>
<div class="t" style="left:272.7px;top:279.68px;width:40px;overflow:hidden;font-size:6.4px;letter-spacing:-0.200px;color:#3d3a5c">UAT</div>
<div class="t" style="left:317.6px;top:279.68px;width:44px;overflow:hidden;font-size:6.4px;letter-spacing:-0.250px;color:#3d3a5c">CRA 002</div>
<div class="a" style="left:178px;top:292.95px;width:321px;height:22.75px;background:#f9f9fa"></div>
<div class="a" style="left:180.7px;top:300.82px;width:7.2px;height:7.3px;border:1px solid #a6c3e4;border-radius:1.5px;background:#fff"></div>
<svg style="left:195.9px;top:301.43px" width="6" height="6.6" viewBox="0 0 6 6.6"><circle cx="3" cy="1.65" r="1.65" fill="#95dc70"/><path d="M0 6.6 Q0 3.7 3 3.7 Q6 3.7 6 6.6Z" fill="#95dc70"/></svg>
<div class="a" style="left:207.3px;top:298.43px;width:11.9px;height:11.7px;border:1px solid #9dbde0;border-radius:2.2px;background:#fff"></div>
<svg style="left:210.8px;top:304px" width="6" height="1.6" viewBox="0 0 6 1.6"><g fill="#2d5c9c"><rect x="0" y="0" width="1.4" height="1.5" rx="0.4"/><rect x="2.1" y="0" width="1.4" height="1.5" rx="0.4"/><rect x="4.2" y="0" width="1.4" height="1.5" rx="0.4"/></g></svg>
<div class="t" style="left:228px;top:302.43px;width:37.8px;overflow:hidden;font-size:6.4px;letter-spacing:-0.150px;color:#3d3a5c">UAT CRA 003</div>
<div class="t" style="left:272.7px;top:302.43px;width:40px;overflow:hidden;font-size:6.4px;letter-spacing:-0.200px;color:#3d3a5c">UAT</div>
<div class="t" style="left:317.6px;top:302.43px;width:44px;overflow:hidden;font-size:6.4px;letter-spacing:-0.250px;color:#3d3a5c">CRA 003</div>
<div class="a" style="left:178px;top:315.70px;width:321px;height:22.75px;background:#ffffff"></div>
<div class="a" style="left:180.7px;top:323.57px;width:7.2px;height:7.3px;border:1px solid #a6c3e4;border-radius:1.5px;background:#fff"></div>
<svg style="left:195.9px;top:324.18px" width="6" height="6.6" viewBox="0 0 6 6.6"><circle cx="3" cy="1.65" r="1.65" fill="#3f8ed8"/><path d="M0 6.6 Q0 3.7 3 3.7 Q6 3.7 6 6.6Z" fill="#3f8ed8"/></svg>
<div class="a" style="left:207.3px;top:321.18px;width:11.9px;height:11.7px;border:1px solid #9dbde0;border-radius:2.2px;background:#fff"></div>
<svg style="left:210.8px;top:326px" width="6" height="1.6" viewBox="0 0 6 1.6"><g fill="#2d5c9c"><rect x="0" y="0" width="1.4" height="1.5" rx="0.4"/><rect x="2.1" y="0" width="1.4" height="1.5" rx="0.4"/><rect x="4.2" y="0" width="1.4" height="1.5" rx="0.4"/></g></svg>
<div class="t" style="left:228px;top:325.18px;width:37.8px;overflow:hidden;font-size:6.4px;letter-spacing:0.100px;color:#3d3a5c">Investigator User</div>
<div class="t" style="left:272.7px;top:325.18px;width:40px;overflow:hidden;font-size:6.4px;letter-spacing:0.110px;color:#3d3a5c">Investigator</div>
<div class="t" style="left:317.6px;top:325.18px;width:44px;overflow:hidden;font-size:6.4px;letter-spacing:-0.070px;color:#3d3a5c">User</div>
<div class="a" style="left:178px;top:338.45px;width:321px;height:22.75px;background:#f9f9fa"></div>
<div class="a" style="left:180.7px;top:346.32px;width:7.2px;height:7.3px;border:1px solid #a6c3e4;border-radius:1.5px;background:#fff"></div>
<svg style="left:195.9px;top:346.93px" width="6" height="6.6" viewBox="0 0 6 6.6"><circle cx="3" cy="1.65" r="1.65" fill="#3f8ed8"/><path d="M0 6.6 Q0 3.7 3 3.7 Q6 3.7 6 6.6Z" fill="#3f8ed8"/></svg>
<div class="a" style="left:207.3px;top:343.93px;width:11.9px;height:11.7px;border:1px solid #9dbde0;border-radius:2.2px;background:#fff"></div>
<svg style="left:210.8px;top:349px" width="6" height="1.6" viewBox="0 0 6 1.6"><g fill="#2d5c9c"><rect x="0" y="0" width="1.4" height="1.5" rx="0.4"/><rect x="2.1" y="0" width="1.4" height="1.5" rx="0.4"/><rect x="4.2" y="0" width="1.4" height="1.5" rx="0.4"/></g></svg>
<div class="t" style="left:228px;top:347.93px;width:37.8px;overflow:hidden;font-size:6.4px;letter-spacing:-0.100px;color:#3d3a5c">UAT CSM 002</div>
<div class="t" style="left:272.7px;top:347.93px;width:40px;overflow:hidden;font-size:6.4px;letter-spacing:-0.200px;color:#3d3a5c">UAT</div>
<div class="t" style="left:317.6px;top:347.93px;width:44px;overflow:hidden;font-size:6.4px;letter-spacing:-0.100px;color:#3d3a5c">CSM 002</div>
<div class="a" style="left:178px;top:361.20px;width:321px;height:22.75px;background:#ffffff"></div>
<div class="a" style="left:180.7px;top:369.07px;width:7.2px;height:7.3px;border:1px solid #a6c3e4;border-radius:1.5px;background:#fff"></div>
<svg style="left:195.9px;top:369.68px" width="6" height="6.6" viewBox="0 0 6 6.6"><circle cx="3" cy="1.65" r="1.65" fill="#3f8ed8"/><path d="M0 6.6 Q0 3.7 3 3.7 Q6 3.7 6 6.6Z" fill="#3f8ed8"/></svg>
<div class="a" style="left:207.3px;top:366.68px;width:11.9px;height:11.7px;border:1px solid #9dbde0;border-radius:2.2px;background:#fff"></div>
<svg style="left:210.8px;top:372px" width="6" height="1.6" viewBox="0 0 6 1.6"><g fill="#2d5c9c"><rect x="0" y="0" width="1.4" height="1.5" rx="0.4"/><rect x="2.1" y="0" width="1.4" height="1.5" rx="0.4"/><rect x="4.2" y="0" width="1.4" height="1.5" rx="0.4"/></g></svg>
<div class="t" style="left:228px;top:370.68px;width:37.8px;overflow:hidden;font-size:6.4px;letter-spacing:-0.100px;color:#3d3a5c">UAT CSM 003</div>
<div class="t" style="left:272.7px;top:370.68px;width:40px;overflow:hidden;font-size:6.4px;letter-spacing:-0.200px;color:#3d3a5c">UAT</div>
<div class="t" style="left:317.6px;top:370.68px;width:44px;overflow:hidden;font-size:6.4px;letter-spacing:-0.100px;color:#3d3a5c">CSM 003</div>
<div class="a" style="left:177px;top:110px;width:310px;height:24px;border:2px solid #990000;z-index:5"></div>
<div class="a" style="left:205.8px;top:384.8px;width:111px;height:2.4px;background:#c9d9ea;border-radius:1px"></div>

<!-- pagination -->
<svg style="left:371.8px;top:394.6px" width="6" height="5.5" viewBox="0 0 6 5.5"><rect x="0" y="0" width="1.2" height="5.5" fill="#3a78c0"/><path d="M6 0 L1.6 2.75 L6 5.5Z" fill="#3a78c0"/></svg>
<svg style="left:387.4px;top:394.3px" width="4.3" height="6" viewBox="0 0 4.3 6"><path d="M4.3 0 L0 3 L4.3 6Z" fill="#3a78c0"/></svg>
<div class="t" style="left:397.5px;top:395px;font-size:6.8px;letter-spacing:-0.3px;color:#8fb0d8">Previous</div>
<div class="a" style="left:427.5px;top:393px;width:15.5px;height:9px;background:#fff;border:0.8px solid #dcdcdc"></div>
<div class="t" style="left:433.5px;top:395.2px;font-size:5.6px;color:#3d3a5c">1</div>
<div class="t" style="left:445.6px;top:395.2px;font-size:5.8px;letter-spacing:-0.1px;color:#2a6ab0">of 5</div>
<div class="t" style="left:457.4px;top:394.4px;font-size:6.9px;letter-spacing:-0.35px;color:#2a6ab0">Next</div>
<svg style="left:476.7px;top:394.3px" width="4.3" height="6" viewBox="0 0 4.3 6"><path d="M0 0 L4.3 3 L0 6Z" fill="#1f68ab"/></svg>
<svg style="left:491px;top:394.6px" width="6" height="5.5" viewBox="0 0 6 5.5"><rect x="4.8" y="0" width="1.2" height="5.5" fill="#1f68ab"/><path d="M0 0 L4.4 2.75 L0 5.5Z" fill="#1f68ab"/></svg>

<!-- right splitter -->
<div class="a" style="left:499.5px;top:114px;width:3px;height:271px;background:#e0e3e8"></div>
<div class="a" style="left:502.5px;top:45px;width:2.5px;height:362px;background:#d3e5f6"></div>
<div class="a" style="left:502px;top:232px;width:3px;height:23px;background:#8cb4dc"></div>
<div class="a" style="left:502px;top:45px;width:3px;height:33.6px;background:#1f68ab;border-radius:2.2px 0 0 0"></div>

<!-- DETAILS PANEL -->
<div class="a" style="left:505px;top:44px;width:195px;height:342px;border:2px solid #990000;background:#fff;z-index:6"></div>
<div class="a" style="left:507px;top:45px;width:191px;height:340px;z-index:7" id="pin">
</div>
<div class="a" style="left:505px;top:386px;width:195px;height:21px;background:#fff"></div>
<div class="a" style="left:505px;top:386px;width:195px;height:3.5px;background:linear-gradient(#e6eef8,#fff)"></div>
<svg style="left:515.7px;top:395px" width="4.6" height="6.4" viewBox="0 0 4.6 6.4"><path d="M4.6 0 L0 3.2 L4.6 6.4Z" fill="#1f68ab"/></svg>
<div class="t" style="left:526px;top:395.8px;font-size:6.55px;font-weight:400;color:#4a84c4;">Previous User</div>
<div class="t" style="left:651px;top:395.8px;font-size:6.55px;font-weight:400;color:#4a84c4;">Next User</div>
<svg style="left:686.6px;top:394.8px" width="4.4" height="6.8" viewBox="0 0 4.4 6.8"><path d="M0 0 L4.4 3.4 L0 6.8Z" fill="#1f68ab"/></svg>
<div class="a" style="left:0;top:0;z-index:8"><div class="t" style="left:512.6px;top:50.2px;font-size:7.3px;font-weight:700;-webkit-text-stroke:0;color:#3572b5;">User Details</div>
<div class="a" style="left:512px;top:61px;width:182px;height:0.8px;background:#e3e9f1"></div>
<div class="t" style="left:512.6px;top:63.9px;font-size:6.65px;font-weight:400;color:#4a4866;">Actions</div>
<div class="a" style="left:512.4px;top:73.2px;width:178.6px;height:16.3px;border:0.8px solid #dce7f4;border-radius:2px;background:#fff"></div>
<div class="t" style="left:515px;top:78.5px;font-size:6.4px;font-weight:400;color:#6b6a80;">Select</div>
<svg style="left:682.8px;top:79.5px" width="5" height="3.5" viewBox="0 0 5 3.5"><path d="M0.4 0.4 L2.5 2.8 L4.6 0.4" fill="none" stroke="#2a6ab0" stroke-width="1"/></svg>
<div class="t" style="left:512.7px;top:101.1px;font-size:6.5px;font-weight:400;color:#4a4866;">Company</div>
<svg style="left:541.4px;top:100.4px" width="4.2" height="4.6" viewBox="0 0 4.2 4.6"><g stroke="#e0302a" stroke-width="1"><path d="M2.1 0.2 V4.4"/><path d="M0.2 1.2 L4 3.4"/><path d="M0.2 3.4 L4 1.2"/></g></svg>
<div class="a" style="left:512.7px;top:111.5px;width:168px;height:18.2px;background:#f6f6f8;border-radius:2px"></div>
<div class="t" style="left:521.8px;top:118.1px;font-size:6.4px;font-weight:700;-webkit-text-stroke:0;color:#2b2858;">TransPerfect Trial Interactive</div>
<svg style="left:673.5px;top:118.5px" width="3.4" height="2.2" viewBox="0 0 3.4 2.2"><path d="M0 0 H3.4 L1.7 2.2Z" fill="#1f68ab"/></svg>
<div class="a" style="left:681.7px;top:111.3px;width:9.3px;height:18.3px;background:#1f68ab;border-radius:1.5px"></div>
<svg style="left:683.6px;top:117.6px" width="5.6" height="5.6" viewBox="0 0 5.6 5.6"><path d="M2.8 0 V5.6 M0 2.8 H5.6" stroke="#fff" stroke-width="1.2"/></svg>
<div class="t" style="left:512.7px;top:140.6px;font-size:6.65px;font-weight:400;color:#4a4866;">Mobile Number</div>
<div class="a" style="left:512.2px;top:150px;width:178.8px;height:14.6px;border:0.9px solid #aeb6c8;border-radius:2.5px;background:#f7f7f8"></div>
<div class="t" style="left:512.7px;top:175.2px;font-size:6.65px;font-weight:400;color:#4a4866;">Phone Number</div>
<div class="a" style="left:512.2px;top:184.6px;width:178.8px;height:15.2px;border:0.9px solid #aeb6c8;border-radius:2.5px;background:#f7f7f8"></div>
<div class="a" style="left:519.6px;top:188px;width:0.8px;height:8.3px;background:#8fb4de"></div>
<div class="t" style="left:512.7px;top:209.3px;font-size:6.65px;font-weight:400;color:#4a4866;">Address</div>
<div class="a" style="left:512.2px;top:219.4px;width:178.8px;height:15.2px;border:0.8px solid #e2e7ee;border-radius:2.5px;background:#f9f9f9"></div>
<div class="t" style="left:512.7px;top:244.7px;font-size:6.65px;font-weight:400;color:#4a4866;">City</div>
<div class="a" style="left:512.2px;top:254.5px;width:178.8px;height:15.2px;border:0.8px solid #e2e7ee;border-radius:2.5px;background:#f9f9f9"></div>
<div class="t" style="left:512.7px;top:279.5px;font-size:6.65px;font-weight:400;color:#4a4866;">State</div>
<div class="a" style="left:512.2px;top:289.3px;width:178.8px;height:15.2px;border:0.8px solid #e2e7ee;border-radius:2.5px;background:#f9f9f9"></div>
<div class="t" style="left:512.7px;top:308.9px;font-size:6.65px;font-weight:400;color:#4a4866;">Zip code</div>
<div class="a" style="left:512.2px;top:318.7px;width:178.8px;height:14.8px;border:0.8px solid #e2e7ee;border-radius:2.5px;background:#f9f9f9"></div>
<div class="t" style="left:512.7px;top:343.8px;font-size:6.65px;font-weight:400;color:#4a4866;">Country</div>
<div class="a" style="left:512.2px;top:353.7px;width:178.8px;height:0.8px;background:#ececf0"></div>
<div class="a" style="left:507px;top:361.5px;width:191px;height:22.5px;background:#edf3fa;border-top:0.6px solid #dfe8f2"></div>
<div class="a" style="left:515px;top:370px;width:38px;height:11.4px;background:#fff;border:0.6px solid #e6ecf3;border-radius:2px"></div>
<div class="t" style="left:523.5px;top:372.6px;font-size:6.5px;font-weight:700;-webkit-text-stroke:0;color:#2a6ab0;">Cancel</div>
<div class="a" style="left:561.4px;top:369.6px;width:38.3px;height:12.4px;background:#fff;border:1px solid #6d98c6;border-radius:2.5px"></div>
<div class="t" style="left:573.2px;top:372.6px;font-size:6.5px;font-weight:700;-webkit-text-stroke:0;color:#2a6ab0;">Save</div>
<div class="a" style="left:609px;top:369.6px;width:84.6px;height:12px;background:#2068ab;border:0.6px solid #1a5fa6;border-radius:2px"></div>
<div class="t" style="left:633px;top:373.3px;font-size:6.5px;font-weight:700;-webkit-text-stroke:0;color:#fff;">Save &amp; Next</div>
<div class="a" style="left:560.4px;top:163.8px;width:44.3px;height:10.3px;background:#fff;border:0.8px solid #9a9a9a;z-index:3"></div>
<div class="t" style="left:563.2px;top:167.2px;font-size:5.6px;font-weight:400;color:#444;z-index:4;-webkit-text-stroke:0">Mobile Number</div></div>

</body></html>
